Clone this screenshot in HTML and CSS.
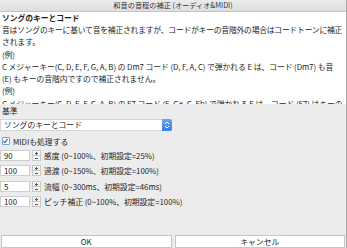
FILE: index.html
```html
<!DOCTYPE html>
<html>
	<head>
		<meta charset="utf-8" />
		<title>和音の音程の補正</title>
		<link rel="stylesheet" href="styles.css">
	</head>
	<body>
		<div class="window">
			<div class="titlebar">和音の音程の補正 (オーディオ&amp;MIDI)</div>
			<div class="help">
				<div class="help-head">ソングのキーとコード</div>
				<p><span class="tight">音はソングのキーに基いて音を補正されますが、コードがキーの音階外の場合はコードトーンに補正</span><br>されます。</p>
				<p>(例)</p>
				<p>C メジャーキー(C, D, E, F, G, A, B) の Dm7 コード (D, F, A, C) で弾かれる E は、コード (Dm7) も音<br>(E) もキーの音階内ですので補正されません。</p>
				<p>(例)</p>
				<p>C メジャーキー(C, D, E, F, G, A, B) の E7 コード (E, G#, C, Eb) で弾かれる E は、コード (E7) はキーの<br>音階外なので補正されます。</p>
			</div>
			<div class="panel">
				<div class="label">基準</div>
				<div class="select">
					<div class="select-value">ソングのキーとコード</div>
					<div class="select-arrow">
						<svg width="10" height="12" viewBox="0 0 10 12">
							<path d="M3 5 L5 3 L7 5" fill="none" stroke="#fff" stroke-width="1"/>
							<path d="M3 7 L5 9 L7 7" fill="none" stroke="#fff" stroke-width="1"/>
						</svg>
					</div>
				</div>
				<div class="check-row">
					<span class="checkbox">
						<svg width="8" height="8" viewBox="0 0 8 8">
							<path d="M1.6 4.2 L3.2 5.9 L6.4 1.8" fill="none" stroke="#2f5da8" stroke-width="1.2"/>
						</svg>
					</span>
					<span>MIDIも処理する</span>
				</div>
				<div class="rows">
					<div class="row">
						<div class="field">90</div>
						<div class="spin"><span class="up"></span><span class="down"></span></div>
						<div class="row-label">感度 (0~100%、初期設定=25%)</div>
					</div>
					<div class="row">
						<div class="field">100</div>
						<div class="spin"><span class="up"></span><span class="down"></span></div>
						<div class="row-label">過渡 (0~150%、初期設定=100%)</div>
					</div>
					<div class="row">
						<div class="field">5</div>
						<div class="spin"><span class="up"></span><span class="down"></span></div>
						<div class="row-label">流幅 (0~300ms、初期設定=46ms)</div>
					</div>
					<div class="row">
						<div class="field">100</div>
						<div class="spin"><span class="up"></span><span class="down"></span></div>
						<div class="row-label">ピッチ補正 (0~100%、初期設定=100%)</div>
					</div>
				</div>
				<div class="buttons">
					<div class="btn">OK</div>
					<div class="btn">キャンセル</div>
				</div>
			</div>
		</div>
	</body>
</html>
```
FILE: styles.css
```css
*{margin: 0;padding: 0;box-sizing: border-box;}
body{
	width: 347px;
	height: 248px;
	overflow: hidden;
	font-family: "Noto Sans CJK JP", sans-serif;
	font-size: 7.8px;
	color: #1e1e1e;
	background: #ececec;
}
.window{
	width: 347px;
	height: 248px;
	display: flex;
	flex-direction: column;
	border-right: 1px solid #a9a9a9;
}
.titlebar{
	height: 12px;
	line-height: 11px;
	text-align: center;
	font-size: 7.2px;
	color: #333;
	background: linear-gradient(#ececec, #dedede);
	border-bottom: 1px solid #c4c4c4;
}
.help{
	height: 92px;
	overflow: hidden;
	background: #fff;
	padding: 1px 2px 0 2px;
	line-height: 12.3px;
	white-space: nowrap;
	letter-spacing: -0.06px;
}
.help .tight{letter-spacing: -0.22px;}
.help-head{
	font-weight: bold;
	line-height: 10px;
	margin-bottom: 1px;
}
.panel{
	flex: 1;
	display: flex;
	flex-direction: column;
	padding-left: 1px;
}
.label{
	height: 11px;
	line-height: 11px;
	margin-top: 1px;
	padding-left: 1px;
}
.select{
	display: flex;
	width: 172px;
	height: 12px;
	margin-top: 3px;
	margin-left: -1px;
}
.select-value{
	flex: 1;
	background: #fff;
	border: 1px solid #d6d6d6;
	border-right: none;
	line-height: 10px;
	padding-left: 3px;
}
.select-arrow{
	width: 10px;
	height: 12px;
	background: linear-gradient(#6aa2f5, #3a7ce8);
	border-radius: 0 2px 2px 0;
}
.select-arrow svg{display: block;}
.check-row{
	display: flex;
	align-items: center;
	gap: 3px;
	height: 10px;
	margin-top: 5px;
	padding-left: 1px;
}
.checkbox{
	width: 8px;
	height: 8px;
	background: #fff;
	border: 1px solid #7a9fd6;
	border-radius: 1px;
	display: flex;
}
.checkbox svg{margin: -1px 0 0 -1px;}
.rows{
	display: flex;
	flex-direction: column;
	gap: 4.3px;
	margin-top: 4px;
}
.row{
	display: flex;
	align-items: center;
	height: 11px;
}
.field{
	width: 30px;
	height: 11px;
	margin-left: -1px;
	background: #fff;
	border: 1px solid #cfcfcf;
	line-height: 9px;
	padding-left: 3px;
}
.spin{
	width: 9px;
	height: 11px;
	margin-left: 2px;
	border: 1px solid #c8c8c8;
	background: #f6f6f6;
	display: flex;
	flex-direction: column;
}
.spin span{
	flex: 1;
	position: relative;
}
.spin .up{border-bottom: 1px solid #c8c8c8;}
.spin span::before{
	content: "";
	position: absolute;
	left: 2px;
	top: 2px;
	width: 3px;
	height: 1px;
	background: #555;
}
.spin .up::after{
	content: "";
	position: absolute;
	left: 3px;
	top: 1px;
	width: 1px;
	height: 3px;
	background: #555;
}
.row-label{
	margin-left: 3px;
	line-height: 11px;
}
.buttons{
	margin-top: auto;
	display: flex;
	gap: 3px;
	padding: 0 1px 0 0;
}
.btn{
	flex: 1;
	height: 13px;
	line-height: 11px;
	text-align: center;
	background: #fff;
	border: 1px solid #c6c6c6;
}
```
